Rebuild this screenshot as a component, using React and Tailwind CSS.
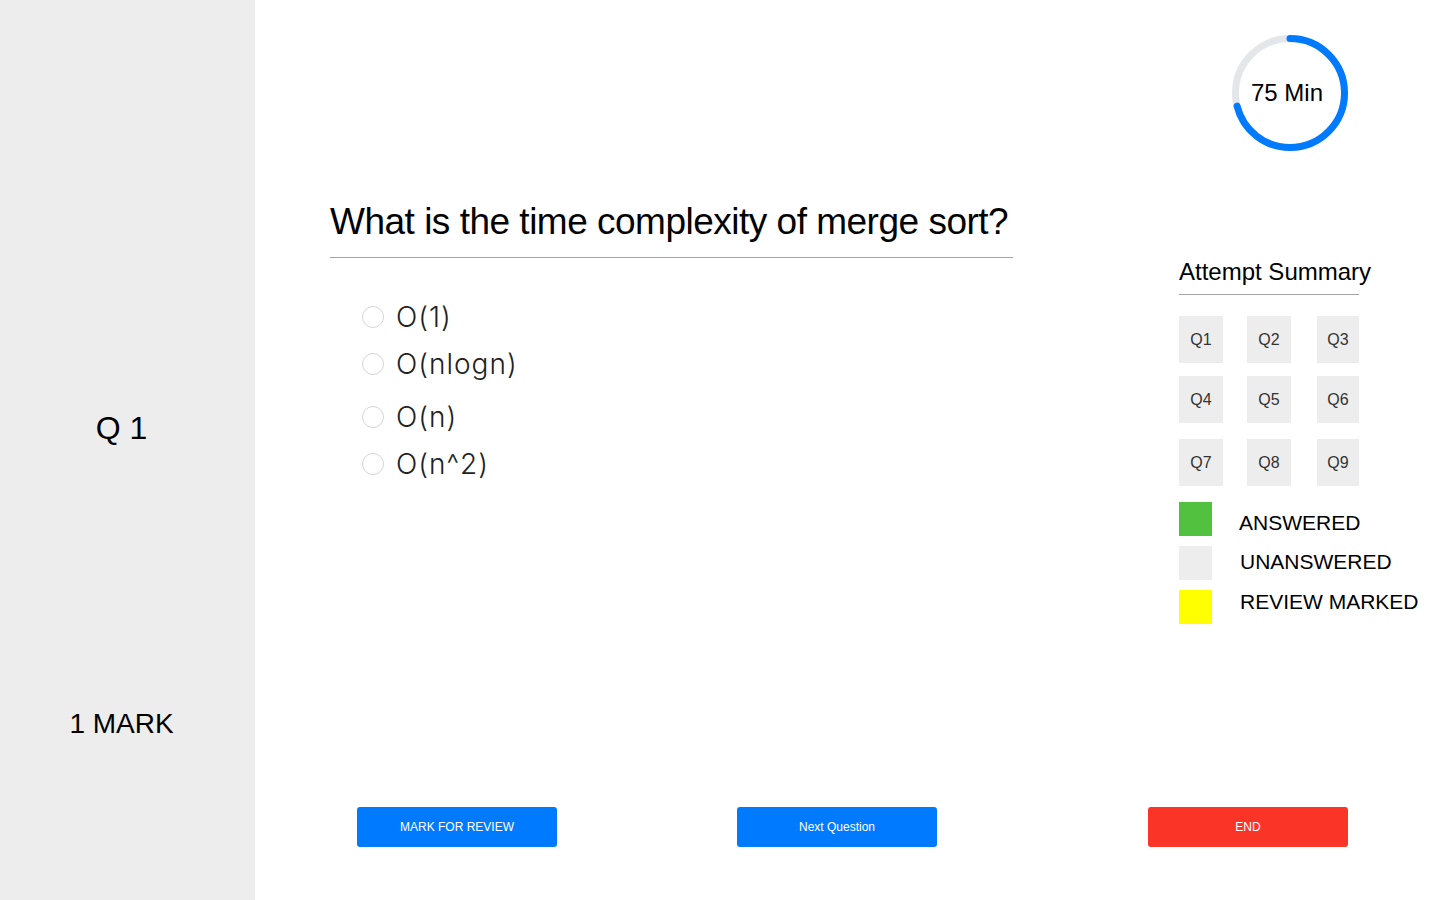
import React from 'react';

const options = ['O(1)', 'O(nlogn)', 'O(n)', 'O(n^2)'];
const questions = ['Q1', 'Q2', 'Q3', 'Q4', 'Q5', 'Q6', 'Q7', 'Q8', 'Q9'];

const legend = [
  { label: 'ANSWERED', color: 'bg-[#51c13f]', pad: 'pt-[9px] ml-[27px]' },
  { label: 'UNANSWERED', color: 'bg-[#ededed]', pad: 'pt-[4px] ml-[28px]' },
  { label: 'REVIEW MARKED', color: 'bg-[#ffff00]', pad: 'pt-0 ml-[28px]' },
];

function Timer() {
  const r = 54.5;
  const c = 2 * Math.PI * r;
  const done = 0.71;
  return (
    <div className="relative w-[116px] h-[116px]">
      <svg width="116" height="116" viewBox="0 0 116 116" className="-rotate-90">
        <circle cx="58" cy="58" r={r} fill="none" stroke="#e4e7ea" strokeWidth="7" />
        <circle
          cx="58"
          cy="58"
          r={r}
          fill="none"
          stroke="#007bff"
          strokeWidth="7"
          strokeLinecap="round"
          strokeDasharray={`${c * done} ${c}`}
        />
      </svg>
      <div className="absolute inset-0 flex items-center justify-center pr-[6px] text-[24px] text-black">
        75 Min
      </div>
    </div>
  );
}

export default function App() {
  return (
    <div className="flex h-[900px] w-[1440px] bg-white font-['Liberation_Sans',Arial,sans-serif]">
      {/* left column */}
      <aside className="w-[255px] shrink-0 bg-[#ededed] flex flex-col items-center">
        <div className="mt-[408px] text-[32px] leading-[40px] text-black pr-[12px]">Q 1</div>
        <div className="mt-[258px] text-[28px] leading-[36px] text-black pr-[12px]">1 MARK</div>
      </aside>

      <main className="flex-1 flex flex-col">
        <div className="flex flex-1">
          {/* question */}
          <section className="ml-[75px] w-[683px] pt-[199px]">
            <h1 className="text-[37px] leading-[46px] text-black tracking-[-0.5px]">
              What is the time complexity of merge sort?
            </h1>
            <div className="mt-[12px] h-px bg-[#a3a3a3]" />
            <div className="mt-[35px] ml-[32px] flex flex-col">
              {options.map((o, i) => (
                <label
                  key={o}
                  className={`flex items-center gap-[12px] h-[47px] ${i === 2 ? 'mt-[6px]' : ''}`}
                >
                  <span className="w-[22px] h-[22px] rounded-full border border-[#d6d6d6] bg-white" />
                  <span className="font-['Inter',sans-serif] font-light text-[28px] tracking-[1px] text-[#222]">
                    {o}
                  </span>
                </label>
              ))}
            </div>
          </section>

          {/* summary */}
          <section className="ml-[166px] flex flex-col">
            <div className="mt-[35px] ml-[53px]">
              <Timer />
            </div>
            <h2 className="mt-[106px] text-[24px] leading-[30px] text-black">Attempt Summary</h2>
            <div className="mt-[7px] h-px w-[180px] bg-[#a3a3a3]" />
            <div className="mt-[21px] grid grid-cols-[44px_44px_44px] gap-x-[24px] gap-y-[13px] w-[181px]">
              {questions.map((q, i) => (
                <div
                  key={q}
                  className={`h-[47px] bg-[#ededed] flex items-center justify-center text-[16px] text-[#333] ${
                    i % 3 === 2 ? 'ml-[2px]' : ''
                  } ${i >= 6 ? 'mt-[3px]' : ''}`}
                >
                  {q}
                </div>
              ))}
            </div>
            <div className="mt-[16px] flex flex-col gap-[10px]">
              {legend.map((l) => (
                <div key={l.label} className="flex items-start">
                  <span className={`w-[33px] h-[34px] shrink-0 ${l.color}`} />
                  <span className={`${l.pad} text-[21px] leading-[24px] text-black whitespace-nowrap`}>
                    {l.label}
                  </span>
                </div>
              ))}
            </div>
          </section>
        </div>

        {/* actions */}
        <div className="flex items-center pl-[102px] pb-[53px]">
          <button className="w-[200px] h-[40px] rounded-[3px] bg-[#007bff] text-white text-[12px]">
            MARK FOR REVIEW
          </button>
          <button className="ml-[180px] w-[200px] h-[40px] rounded-[3px] bg-[#007bff] text-white text-[12px]">
            Next Question
          </button>
          <button className="ml-[211px] w-[200px] h-[40px] rounded-[3px] bg-[#fa3426] text-white text-[12px]">
            END
          </button>
        </div>
      </main>
    </div>
  );
}
